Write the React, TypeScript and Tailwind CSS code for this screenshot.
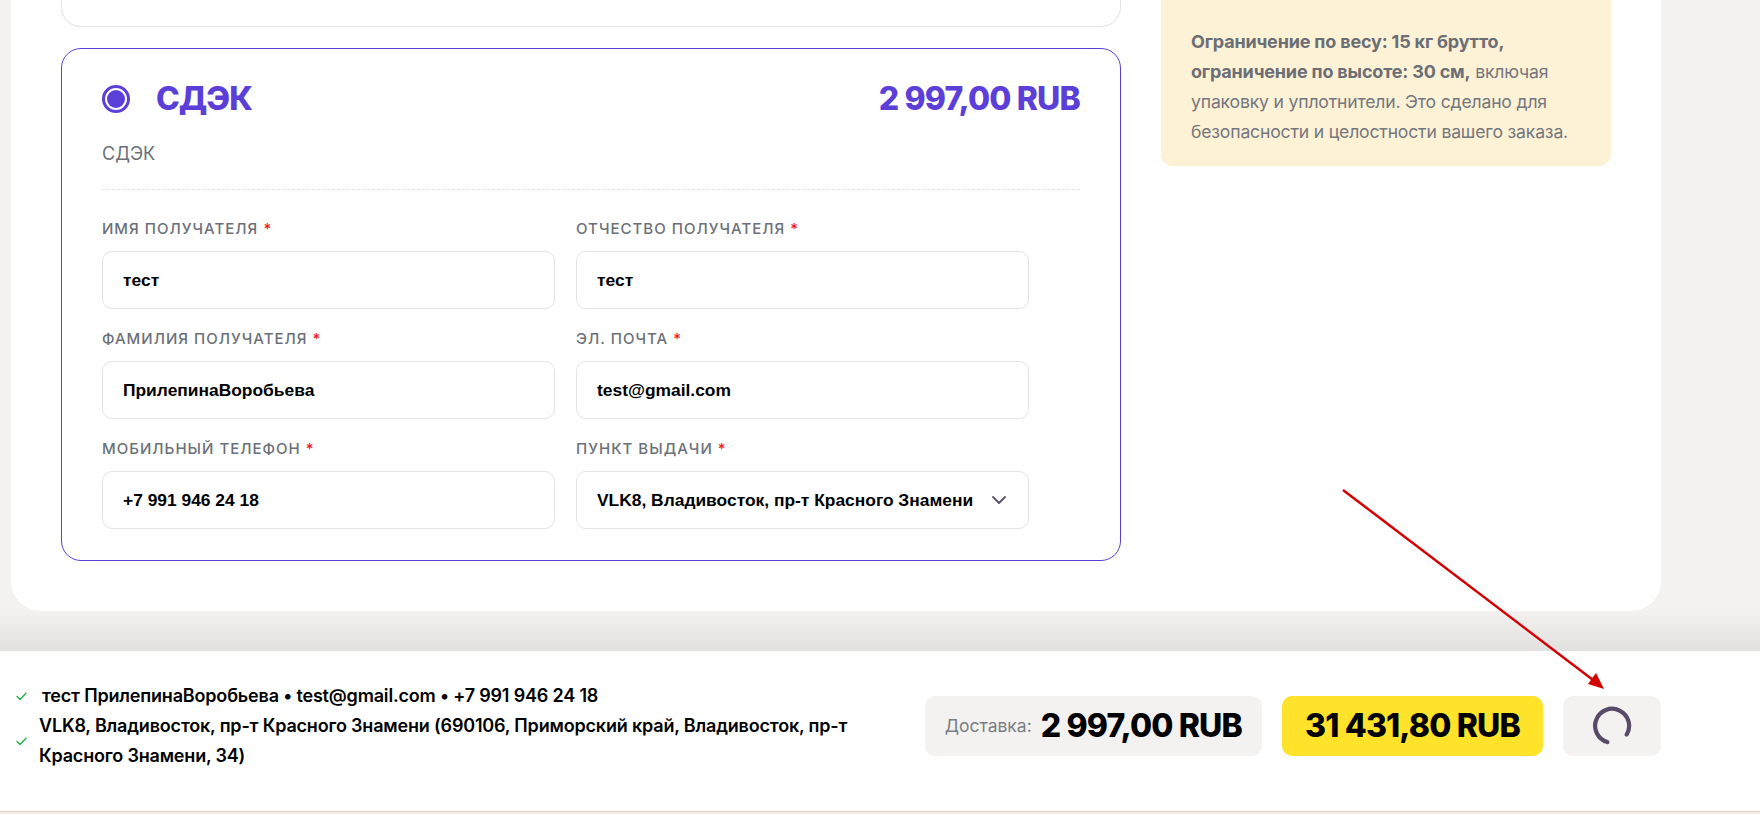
import React from "react";

const inter = { fontFamily: "Inter, 'Noto Sans', sans-serif" };
const arial = { fontFamily: "'Liberation Sans', Arial, sans-serif" };

function Field({ label, value, select }: { label: string; value: string; select?: boolean }) {
  return (
    <div className="flex flex-col">
      <div className="h-[20px] leading-[20px] text-[15px] font-medium uppercase tracking-[0.068em] text-[#6b7078]" style={inter}>
        {label} <span className="text-[#ef1b1b]">*</span>
      </div>
      <div className="mt-[12px] h-[58px] rounded-[10px] border border-[#e4e4e4] bg-white flex items-center pl-[20px] pr-[22px]">
        <span className="flex-1 min-w-0 text-[17.4px] font-bold text-black whitespace-nowrap overflow-hidden" style={arial}>
          {value}
        </span>
        {select && (
          <svg width="14" height="8" viewBox="0 0 14 8" fill="none" className="shrink-0 ml-[8px]">
            <path d="M1 1l6 6 6-6" stroke="#5b5464" strokeWidth="1.8" strokeLinecap="round" strokeLinejoin="round" />
          </svg>
        )}
      </div>
    </div>
  );
}

function Check() {
  return (
    <svg width="11" height="9" viewBox="0 0 11 9" fill="none" className="shrink-0">
      <path d="M1 4.5l3 3L10 1.2" stroke="#22b54a" strokeWidth="1.4" strokeLinecap="round" strokeLinejoin="round" />
    </svg>
  );
}

export default function App() {
  return (
    <div className="relative w-[1760px] h-[814px] overflow-hidden bg-[#f3f2f0] flex flex-col" style={inter}>
      {/* main white panel */}
      <div className="ml-[11px] w-[1650px] bg-white rounded-b-[30px] px-[50px] pb-[50px] flex gap-[40px]">
        {/* left column */}
        <div className="w-[1060px] flex flex-col gap-[21px]">
          <div className="h-[27px] border border-t-0 border-[#e4e4e4] rounded-b-[20px]" />
          <div className="border border-[#5c3fd8] rounded-[20px] px-[40px] pt-[30px] pb-[31px]">
            <div className="flex items-center justify-between h-[40px]">
              <div className="flex items-center gap-[26px]">
                <div className="w-[28px] h-[28px] rounded-full border-[3px] border-[#5c3fd8] p-[2px]">
                  <div className="w-full h-full rounded-full bg-[#5c3fd8]" />
                </div>
                <span className="text-[32px] leading-[40px] font-extrabold text-[#5c3fd8] tracking-[-0.03em]">СДЭК</span>
              </div>
              <span className="text-[32px] leading-[40px] font-extrabold text-[#5c3fd8] tracking-[-0.026em]">2 997,00 RUB</span>
            </div>
            <div className="mt-[23px] text-[18px] leading-[24px] text-[#6b7078]">СДЭК</div>
            <div className="mt-[23px] border-t border-dashed border-[#e2e2e2]" />
            <div className="mt-[29px] w-[927px] grid grid-cols-2 gap-x-[21px] gap-y-[20px]">
              <Field label="Имя получателя" value="тест" />
              <Field label="Отчество получателя" value="тест" />
              <Field label="Фамилия получателя" value="ПрилепинаВоробьева" />
              <Field label="Эл. почта" value="test@gmail.com" />
              <Field label="Мобильный телефон" value="+7 991 946 24 18" />
              <Field label="Пункт выдачи" value="VLK8, Владивосток, пр-т Красного Знамени" select />
            </div>
          </div>
        </div>
        {/* right column */}
        <div className="w-[450px]">
          <div className="bg-[#fdf1d6] rounded-b-[12px] pl-[30px] pr-[26px] pt-[27px] pb-[19px] text-[17.6px] leading-[30px] tracking-[-0.01em] text-[#74777d]">
            <span className="text-[18px] font-bold text-[#6b6e74]">Ограничение по весу: 15 кг брутто, ограничение по высоте: 30 см,</span>{" "}
            включая упаковку и уплотнители. Это сделано для безопасности и целостности вашего заказа.
          </div>
        </div>
      </div>

      {/* shadow strip */}
      <div className="h-[40px] bg-gradient-to-b from-[#f3f2f0] to-[#e2e1df]" />

      {/* footer */}
      <div className="h-[160px] bg-white pt-[30px] pl-[16px] pr-[99px]">
        <div className="flex items-center gap-[40px]">
          <div className="flex-1 flex flex-col text-[18px] leading-[30px] font-semibold tracking-[-0.01em] text-black">
            <div className="flex items-center gap-[12px]">
              <Check />
              <span className="pl-[3px]">тест ПрилепинаВоробьева • test@gmail.com • +7 991 946 24 18</span>
            </div>
            <div className="flex items-center gap-[12px]">
              <Check />
              <span>VLK8, Владивосток, пр-т Красного Знамени (690106, Приморский край, Владивосток, пр-т Красного Знамени, 34)</span>
            </div>
          </div>
          <div className="flex items-center gap-[20px] shrink-0">
            <div className="h-[60px] rounded-[10px] bg-[#f3f2f0] px-[20px] flex items-center gap-[9px]">
              <span className="text-[17.5px] text-[#7b7e84]">Доставка:</span>
              <span className="text-[32px] font-extrabold text-black tracking-[-0.026em]">2 997,00 RUB</span>
            </div>
            <div className="w-[261px] h-[60px] rounded-[10px] bg-[#ffe32b] flex items-center justify-center">
              <span className="text-[32px] font-extrabold text-black tracking-[-0.026em]">31 431,80 RUB</span>
            </div>
            <div className="w-[98px] h-[60px] rounded-[10px] bg-[#f3f2f0] flex items-center justify-center">
              <svg width="40" height="40" viewBox="0 0 40 40" fill="none">
                <path d="M15.3 36.1 A17 17 0 1 1 34.7 28.5" stroke="#584b69" strokeWidth="4.2" strokeLinecap="round" />
              </svg>
            </div>
          </div>
        </div>
      </div>
      <div className="h-[3px] border-t border-[#e0cfcb] bg-[#f7eeeb]" />

      {/* annotation arrow */}
      <svg className="absolute left-0 top-0 pointer-events-none" width="1760" height="814" viewBox="0 0 1760 814">
        <line x1="1343" y1="490" x2="1597" y2="683" stroke="#d40000" strokeWidth="2.5" />
        <path d="M1604 689 L1588 684 L1596 673 Z" fill="#d40000" />
      </svg>
    </div>
  );
}
